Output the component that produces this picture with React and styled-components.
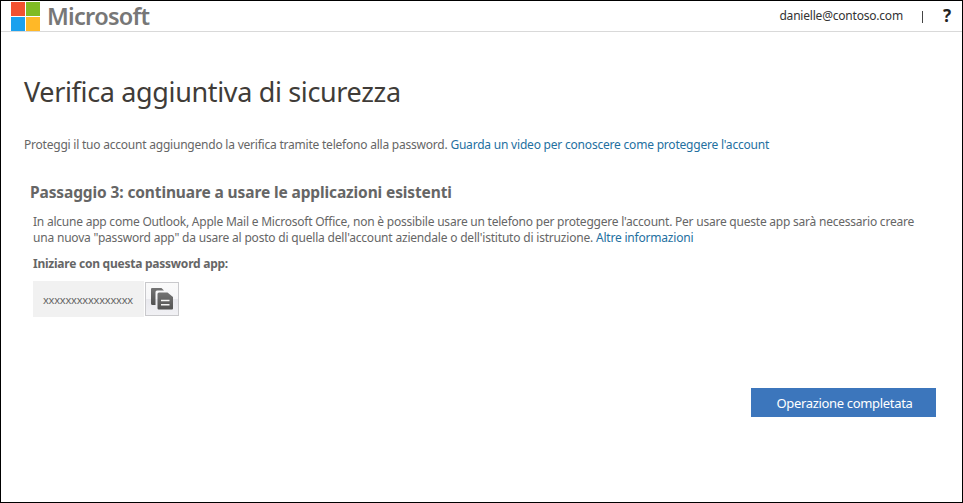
import React from 'react';
import styled, { createGlobalStyle } from 'styled-components';

const GlobalStyle = createGlobalStyle`
  * { box-sizing: border-box; }
  body { margin: 0; background: #fff; }
`;

const Page = styled.div`
  display: flex;
  flex-direction: column;
  width: 963px;
  height: 503px;
  border: 1px solid #000;
  background: #fff;
  font-family: "Noto Sans", "Open Sans", sans-serif;
  font-size: 12px;
  color: #666;
  white-space: nowrap;
`;

const Header = styled.header`
  display: flex;
  align-items: center;
  justify-content: space-between;
  height: 31px;
  padding: 0 11px 0 10px;
  border-bottom: 1px solid #d9d9d9;
`;

const Brand = styled.div`
  display: flex;
  align-items: center;
  gap: 7px;
`;

const Logo = styled.svg`
  display: block;
  width: 29px;
  height: 29px;
  margin-top: 1px;
`;

const BrandName = styled.span`
  margin-top: 1px;
  font-size: 23.5px;
  font-weight: 600;
  line-height: 29px;
  letter-spacing: -0.72px;
  color: #777;
`;

const Account = styled.div`
  display: flex;
  align-items: center;
  line-height: 30px;
  color: #333;
`;

const Email = styled.span`
  letter-spacing: -0.21px;
`;

const Divider = styled.span`
  width: 1px;
  height: 12px;
  margin: 2px 20px 0 19px;
  background: #444;
`;

const Help = styled.span`
  font-size: 17px;
  font-weight: 700;
  color: #222;
`;

const Main = styled.main`
  display: flex;
  flex: 1;
  flex-direction: column;
  align-items: flex-start;
  padding: 42px 26px 0 23px;
`;

const Title = styled.h1`
  margin: 0;
  font-size: 27px;
  font-weight: 400;
  line-height: 36px;
  letter-spacing: -0.35px;
  color: #403c38;
`;

const Text = styled.p`
  margin: 0;
  line-height: 16px;
  letter-spacing: ${({ $spacing }) => $spacing}px;
`;

const Intro = styled(Text)`
  margin-top: 27px;
`;

const Link = styled.a`
  color: #24709f;
  letter-spacing: -0.205px;
  text-decoration: none;
`;

const StepTitle = styled.h2`
  margin: 28px 0 0 6px;
  font-size: 15.5px;
  font-weight: 700;
  line-height: 22px;
  letter-spacing: -0.12px;
`;

const Step = styled.section`
  display: flex;
  flex-direction: column;
  align-items: flex-start;
  padding: 11px 0 0 9px;
`;

const Label = styled.h3`
  margin: 10px 0 9px;
  font-size: 12px;
  font-weight: 700;
  line-height: 16px;
  letter-spacing: -0.243px;
`;

const PasswordRow = styled.div`
  display: flex;
  align-items: center;
  gap: 1px;
`;

const Password = styled.span`
  width: 111px;
  height: 36px;
  padding-left: 10px;
  background: #f1f1f1;
  font-size: 11px;
  line-height: 37px;
  letter-spacing: -0.194px;
`;

const CopyButton = styled.button`
  display: flex;
  align-items: center;
  justify-content: center;
  width: 34px;
  height: 34px;
  padding: 0;
  border: 1px solid #c9c9cc;
  background: linear-gradient(#fafafa 0%, #f6f6f8 50%, #e9e9ee 50%, #f1f1f4 100%);
`;

const CopyIcon = styled.svg`
  display: block;
  width: 32px;
  height: 32px;
`;

const DoneButton = styled.button`
  align-self: flex-end;
  width: 185px;
  height: 29px;
  margin-top: 71px;
  padding: 1px 0 0 2px;
  border: 0;
  background: #3c76bc;
  font-family: inherit;
  font-size: 13px;
  line-height: 28px;
  letter-spacing: -0.327px;
  color: #fff;
`;

export default function App() {
  return (
    <Page>
      <GlobalStyle />
      <Header>
        <Brand>
          <Logo viewBox="0 0 29 29" aria-hidden="true">
            <path fill="#f25130" d="M0 0h14v14H0z" />
            <path fill="#80bb24" d="M15 0h14v14H15z" />
            <path fill="#1ba1ee" d="M0 15h14v14H0z" />
            <path fill="#ffb827" d="M15 15h14v14H15z" />
          </Logo>
          <BrandName>Microsoft</BrandName>
        </Brand>
        <Account>
          <Email>danielle@contoso.com</Email>
          <Divider />
          <Help>?</Help>
        </Account>
      </Header>
      <Main>
        <Title>Verifica aggiuntiva di sicurezza</Title>
        <Intro $spacing={-0.22}>
          Proteggi il tuo account aggiungendo la verifica tramite telefono alla password.{' '}
          <Link>Guarda un video per conoscere come proteggere l'account</Link>
        </Intro>
        <StepTitle>Passaggio 3: continuare a usare le applicazioni esistenti</StepTitle>
        <Step>
          <Text $spacing={-0.225}>
            In alcune app come Outlook, Apple Mail e Microsoft Office, non è possibile usare un telefono per proteggere l'account. Per usare queste app sarà necessario creare
          </Text>
          <Text $spacing={-0.195}>
            una nuova "password app" da usare al posto di quella dell'account aziendale o dell'istituto di istruzione.{' '}
            <Link>Altre informazioni</Link>
          </Text>
          <Label>Iniziare con questa password app:</Label>
          <PasswordRow>
            <Password>xxxxxxxxxxxxxxxx</Password>
            <CopyButton aria-label="Copia">
              <CopyIcon viewBox="0 0 32 32" aria-hidden="true">
                <defs>
                  <linearGradient id="sheet" x1="0" y1="0" x2="0" y2="1">
                    <stop offset="0" stopColor="#747474" />
                    <stop offset="1" stopColor="#525252" />
                  </linearGradient>
                </defs>
                <path fill="url(#sheet)" d="M6 5h9.500l2.500 2.500H11Q9.500 7.500 9.500 9V22H6.500Q5 22 5 20.500V6Q5 5 6 5Z" />
                <path fill="url(#sheet)" d="M13 9.500h8.500L27 14v11.500Q27 26.500 26 26.500H12.700Q11.500 26.500 11.500 25.300V11Q11.500 9.500 13 9.500Z" />
                <path fill="none" stroke="#f4f4f4" strokeWidth="1.6" d="M15 17.500h8.500M15 21.800h8.500" />
              </CopyIcon>
            </CopyButton>
          </PasswordRow>
        </Step>
        <DoneButton>Operazione completata</DoneButton>
      </Main>
    </Page>
  );
}
